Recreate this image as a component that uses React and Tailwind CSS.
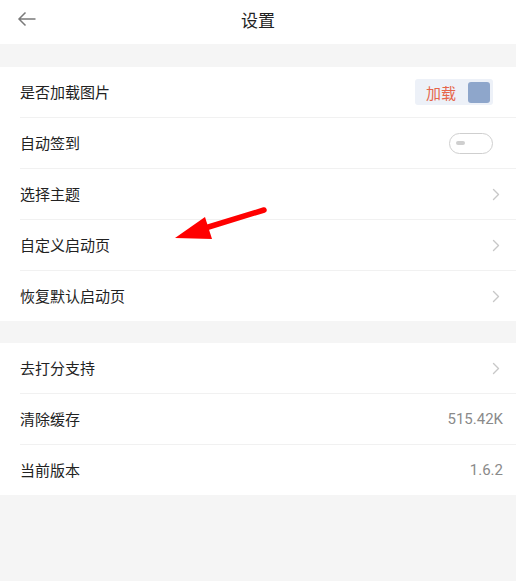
const font = { fontFamily: '"Noto Sans CJK SC", "Noto Sans", sans-serif' };
const numFont = { fontFamily: 'Roboto, "Noto Sans CJK SC", sans-serif' };

const Chevron = () => (
  <svg width="8" height="13" viewBox="0 0 8 13" className="mr-[3px]">
    <path d="M1.5 1.5 L6.5 6.5 L1.5 11.5" fill="none" stroke="#c8c8c8" strokeWidth="1.4" strokeLinecap="round" strokeLinejoin="round" />
  </svg>
);

const Row = ({ label, right, last }) => (
  <div className={`ml-[20px] pr-[13px] flex items-center justify-between ${last ? "h-[50px]" : "h-[51px] border-b border-[#f1f1f1]"}`}>
    <span className="text-[15px] text-[#222]">{label}</span>
    {right}
  </div>
);

const LoadToggle = () => (
  <div className="mr-[10px] flex items-center h-[26px] w-[78px] rounded-[3px] bg-[#edf1f8] pl-[11px] pr-[3px] justify-between">
    <span className="text-[15px] text-[#e5664b] leading-none">加载</span>
    <span className="w-[22px] h-[21px] rounded-[3px] bg-[#8ea6cb]" />
  </div>
);

const OffSwitch = () => (
  <div className="mr-[10px] w-[44px] h-[21px] rounded-full border-[1.5px] border-[#cfcfcf] flex items-center pl-[6px]">
    <span className="w-[9px] h-[4px] rounded-full bg-[#cfcfcf]" />
  </div>
);

const Value = ({ children }) => (
  <span className="text-[15px] text-[#8a8a8a]" style={numFont}>{children}</span>
);

export default function App() {
  return (
    <div className="relative w-[516px] h-[581px] bg-[#f5f5f5] overflow-hidden" style={font}>
      <div className="h-[44px] bg-white flex items-center relative pb-[5px]">
        <svg width="20" height="16" viewBox="0 0 20 16" className="absolute left-[17px] top-[11px]">
          <path d="M18.5 8 H2 M8.5 1.5 L2 8 L8.5 14.5" fill="none" stroke="#7a7a7a" strokeWidth="1.5" />
        </svg>
        <div className="flex-1 text-center text-[17px] text-[#222]">设置</div>
      </div>

      <div className="mt-[23px] bg-white">
        <Row label="是否加载图片" right={<LoadToggle />} />
        <Row label="自动签到" right={<OffSwitch />} />
        <Row label="选择主题" right={<Chevron />} />
        <Row label="自定义启动页" right={<Chevron />} />
        <Row label="恢复默认启动页" right={<Chevron />} last />
      </div>

      <div className="mt-[22px] bg-white">
        <Row label="去打分支持" right={<Chevron />} />
        <Row label="清除缓存" right={<Value>515.42K</Value>} />
        <Row label="当前版本" right={<Value>1.6.2</Value>} last />
      </div>

      <svg width="516" height="581" className="absolute inset-0 pointer-events-none">
        <line x1="264" y1="210" x2="202" y2="229" stroke="#f00" strokeWidth="5.5" strokeLinecap="round" />
        <polygon points="175,238 205,217 212,239" fill="#f00" />
      </svg>
    </div>
  );
}
